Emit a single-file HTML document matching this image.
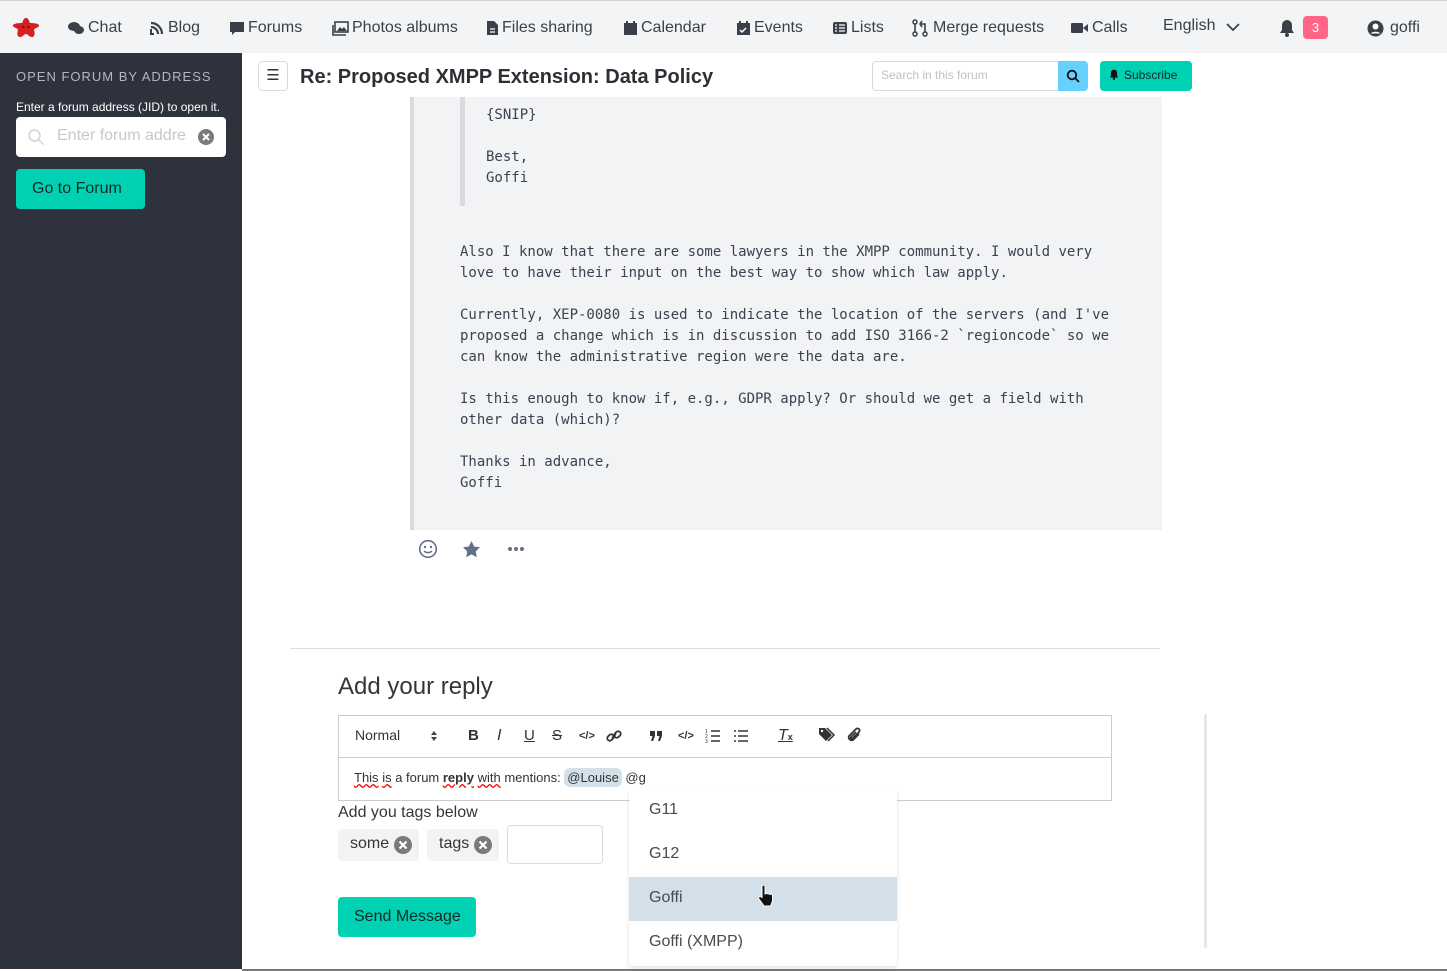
<!DOCTYPE html>
<html><head><meta charset="utf-8"><style>
*{box-sizing:border-box;margin:0;padding:0}
body{width:1447px;height:971px;position:relative;overflow:hidden;background:#fff;font-family:"Liberation Sans",sans-serif;color:#363636}
.abs{position:absolute}
.nav{left:0;top:0;width:1447px;height:53px;background:#f3f4f6;border-top:1px solid #cfcfcf}
.ni{position:absolute;top:18px;font-size:16px;color:#3a3f4a;white-space:nowrap;display:flex;align-items:center;gap:3px}
.side{left:0;top:53px;width:242px;height:916px;background:#2e323d}
.mono{font-family:"DejaVu Sans Mono","Liberation Mono",monospace;font-size:14px;color:#3b4150;white-space:pre;line-height:21px}
.tb{position:absolute;top:727px;font-size:15px;color:#333}
</style></head><body>
<div class="abs nav">
 <svg class="abs" style="left:11px;top:15px" width="30" height="22" viewBox="0 0 30 22"><path d="M15 2 C18 2 18 6 19 7 C24 7 29 8 28 10 C27 12 23 12 23 14 C24 17 24 21 21 21 C18 21 17 18 15 18 C13 18 12 21 9 21 C6 21 6 17 7 14 C7 12 3 12 2 10 C1 8 6 7 11 7 C12 6 12 2 15 2Z" fill="#d61f1f"/><circle cx="12.5" cy="11" r="1" fill="#700"/><circle cx="17.5" cy="11" r="1" fill="#700"/></svg>
 <div class="ni" style="left:67px"><svg width="18" height="14" viewBox="0 0 18 14"><ellipse cx="7" cy="5.5" rx="6" ry="4.5" fill="#3a3f4a"/><ellipse cx="12" cy="9" rx="5" ry="4" fill="#3a3f4a"/></svg>Chat</div>
 <div class="ni" style="left:149px"><svg width="16" height="16" viewBox="0 0 16 16"><path d="M2 3a11 11 0 0 1 11 11M2 7a7 7 0 0 1 7 7" stroke="#3a3f4a" stroke-width="2.2" fill="none"/><path d="M2 9v5h3" stroke="#3a3f4a" stroke-width="2" fill="none"/></svg>Blog</div>
 <div class="ni" style="left:229px"><svg width="16" height="16" viewBox="0 0 16 16"><path d="M1 2h14v10H6l-3 3v-3H1z" fill="#3a3f4a"/></svg>Forums</div>
 <div class="ni" style="left:332px"><svg width="17" height="15" viewBox="0 0 17 15"><rect x="3" y="1" width="13" height="10" fill="none" stroke="#3a3f4a" stroke-width="1.6"/><path d="M1 4v10h13" fill="none" stroke="#3a3f4a" stroke-width="1.6"/><path d="M5 10l3-4 2 2 2-2 3 4z" fill="#3a3f4a"/></svg>Photos albums</div>
 <div class="ni" style="left:486px"><svg width="13" height="16" viewBox="0 0 13 16"><path d="M1 1h7l4 4v10H1z" fill="#3a3f4a"/><path d="M4 9h5M4 12h5" stroke="#fff" stroke-width="1.2"/></svg>Files sharing</div>
 <div class="ni" style="left:623px"><svg width="15" height="16" viewBox="0 0 15 16"><rect x="1" y="3" width="13" height="12" fill="#3a3f4a"/><rect x="3" y="1" width="2" height="3" fill="#3a3f4a"/><rect x="10" y="1" width="2" height="3" fill="#3a3f4a"/></svg>Calendar</div>
 <div class="ni" style="left:736px"><svg width="15" height="16" viewBox="0 0 15 16"><rect x="1" y="3" width="13" height="12" fill="#3a3f4a"/><rect x="3" y="1" width="2" height="3" fill="#3a3f4a"/><rect x="10" y="1" width="2" height="3" fill="#3a3f4a"/><path d="M4 10l2 2 4-4" stroke="#fff" stroke-width="1.5" fill="none"/></svg>Events</div>
 <div class="ni" style="left:832px"><svg width="16" height="14" viewBox="0 0 16 14"><rect x="1" y="1" width="14" height="12" rx="2" fill="#3a3f4a"/><path d="M3 4h2M7 4h6M3 7h2M7 7h6M3 10h2M7 10h6" stroke="#fff" stroke-width="1.3"/></svg>Lists</div>
 <div class="ni" style="left:912px"><svg width="18" height="18" viewBox="0 0 18 18"><circle cx="3" cy="3" r="2" fill="none" stroke="#3a3f4a" stroke-width="1.5"/><circle cx="3" cy="15" r="2" fill="none" stroke="#3a3f4a" stroke-width="1.5"/><circle cx="13" cy="15" r="2" fill="none" stroke="#3a3f4a" stroke-width="1.5"/><path d="M3 5v8M13 13V5H8M10 2l-2 3 2 3" stroke="#3a3f4a" stroke-width="1.6" fill="none"/></svg>Merge requests</div>
 <div class="ni" style="left:1071px"><svg width="18" height="12" viewBox="0 0 18 12"><rect x="0" y="1" width="12" height="10" rx="1" fill="#3a3f4a"/><path d="M12 6l5-4v8z" fill="#3a3f4a"/></svg>Calls</div>
 <div class="ni" style="left:1163px;top:16px">English <svg width="18" height="14" viewBox="0 0 18 14" style="margin-left:6px"><path d="M3 5l6 6 6-6" stroke="#3a3f4a" stroke-width="1.8" fill="none"/></svg></div>
 <svg class="abs" style="left:1279px;top:18px" width="16" height="18" viewBox="0 0 16 18"><path d="M8 1a5 5 0 0 1 5 5v5l2 3H1l2-3V6a5 5 0 0 1 5-5z" fill="#3a3f4a"/><circle cx="8" cy="16" r="2" fill="#3a3f4a"/></svg>
 <div class="abs" style="left:1303px;top:15px;width:25px;height:23px;border-radius:4px;background:#ff6685;color:#fff;font-size:13px;text-align:center;line-height:23px">3</div>
 <div class="ni" style="left:1367px;gap:6px"><svg width="17" height="17" viewBox="0 0 17 17"><circle cx="8.5" cy="8.5" r="8" fill="#3a3f4a"/><circle cx="8.5" cy="6.5" r="3" fill="#fff"/><path d="M3.5 13.5a6 4 0 0 1 10 0" fill="#fff"/></svg>goffi</div>
</div>
<div class="abs side">
 <div class="abs" style="left:16px;top:16px;font-size:13px;letter-spacing:1px;color:#b0b6c2">OPEN FORUM BY ADDRESS</div>
 <div class="abs" style="left:16px;top:47px;font-size:12px;color:#fff">Enter a forum address (JID) to open it.</div>
 <div class="abs" style="left:16px;top:64px;width:210px;height:40px;background:#fff;border-radius:4px">
  <svg class="abs" style="left:11px;top:11px" width="18" height="18" viewBox="0 0 18 18"><circle cx="7.5" cy="7.5" r="5.5" stroke="#d5d8de" stroke-width="1.8" fill="none"/><path d="M11.5 11.5l5 5" stroke="#d5d8de" stroke-width="1.8"/></svg>
  <div class="abs" style="left:41px;top:10px;font-size:16px;color:#c8c8c8">Enter forum addre</div>
  <svg class="abs" style="left:182px;top:12px" width="16" height="16" viewBox="0 0 16 16"><circle cx="8" cy="8" r="8" fill="#7a7a7a"/><path d="M5 5l6 6M11 5l-6 6" stroke="#fff" stroke-width="2"/></svg>
 </div>
 <div class="abs" style="left:16px;top:116px;width:129px;height:40px;background:#00d1b2;border-radius:4px;font-size:16px;color:#0f2a26;padding:11px 0 0 16px">Go to Forum</div>
</div>
<div class="abs" style="left:242px;top:969px;width:1205px;height:2px;background:#777"></div>
<div class="abs" style="left:410px;top:95px;width:752px;height:435px;background:#f2f3f5;border-left:4px solid #d8dade"></div>
<div class="abs" style="left:460px;top:95px;width:5px;height:111px;background:#d8dade"></div>
<div class="abs mono" style="left:486px;top:105px">{SNIP}

Best,
Goffi</div>
<div class="abs mono" style="left:460px;top:242px">Also I know that there are some lawyers in the XMPP community. I would very
love to have their input on the best way to show which law apply.

Currently, XEP-0080 is used to indicate the location of the servers (and I've
proposed a change which is in discussion to add ISO 3166-2 `regioncode` so we
can know the administrative region were the data are.

Is this enough to know if, e.g., GDPR apply? Or should we get a field with
other data (which)?

Thanks in advance,
Goffi</div>
<div class="abs" style="left:242px;top:53px;width:1205px;height:44px;background:#fff"></div>
<div class="abs" style="left:258px;top:61px;width:30px;height:30px;border:1px solid #dbdbdb;border-radius:4px;font-size:15px;text-align:center;line-height:28px;color:#333">☰</div>
<div class="abs" style="left:300px;top:66px;font-size:20px;font-weight:bold;color:#2d2f36">Re: Proposed XMPP Extension: Data Policy</div>
<div class="abs" style="left:872px;top:61px;width:187px;height:30px;border:1px solid #dbdbdb;border-radius:4px 0 0 4px;font-size:12px;color:#c0c0c0;padding:6px 8px">Search in this forum</div>
<div class="abs" style="left:1058px;top:61px;width:30px;height:30px;background:#66d1ff;border-radius:0 4px 4px 0"><svg style="margin:8px" width="14" height="14" viewBox="0 0 14 14"><circle cx="6" cy="6" r="4.3" stroke="#111" stroke-width="1.8" fill="none"/><path d="M9 9l4 4" stroke="#111" stroke-width="1.8"/></svg></div>
<div class="abs" style="left:1100px;top:61px;width:92px;height:30px;background:#00d1b2;border-radius:4px;font-size:12px;color:#0f2a26;padding:7px 0 0 9px"><svg width="10" height="11" viewBox="0 0 16 18" style="vertical-align:-1px;margin-right:5px"><path d="M8 1a5 5 0 0 1 5 5v5l2 3H1l2-3V6a5 5 0 0 1 5-5z" fill="#111"/><circle cx="8" cy="16" r="2" fill="#111"/></svg>Subscribe</div>
<svg class="abs" style="left:418px;top:539px" width="20" height="20" viewBox="0 0 20 20"><circle cx="10" cy="10" r="8.3" stroke="#647089" stroke-width="1.6" fill="none"/><circle cx="7" cy="8" r="1.2" fill="#647089"/><circle cx="13" cy="8" r="1.2" fill="#647089"/><path d="M6 12a5 4 0 0 0 8 0" stroke="#647089" stroke-width="1.5" fill="none"/></svg>
<svg class="abs" style="left:462px;top:540px" width="19" height="18" viewBox="0 0 20 19"><path d="M10 1l2.8 5.8 6.2.8-4.5 4.4 1.1 6.2L10 15.2 4.4 18.2 5.5 12 1 7.6l6.2-.8z" fill="#647089"/></svg>
<svg class="abs" style="left:507px;top:545px" width="18" height="8" viewBox="0 0 18 8"><circle cx="3" cy="4" r="2" fill="#647089"/><circle cx="9" cy="4" r="2" fill="#647089"/><circle cx="15" cy="4" r="2" fill="#647089"/></svg>
<div class="abs" style="left:290px;top:648px;width:870px;height:1px;background:#dcdcdc"></div>
<div class="abs" style="left:338px;top:673px;font-size:24px;color:#363636">Add your reply</div>
<div class="abs" style="left:1204px;top:714px;width:3px;height:234px;background:#e8e8e8;border-radius:2px"></div>
<div class="abs" style="left:338px;top:715px;width:774px;height:86px;border:1px solid #ccc"></div>
<div class="abs" style="left:338px;top:757px;width:774px;height:1px;background:#ccc"></div>
<div class="tb" style="left:355px;font-size:14px;top:727px">Normal</div>
<svg class="abs" style="left:430px;top:729px" width="8" height="14" viewBox="0 0 8 14"><path d="M1 6l3-4 3 4zM1 8l3 4 3-4z" fill="#444"/></svg>
<div class="tb" style="left:468px;font-weight:bold">B</div>
<div class="tb" style="left:497px;font-style:italic;font-size:16px">I</div>
<div class="tb" style="left:524px;text-decoration:underline">U</div>
<div class="tb" style="left:552px;text-decoration:line-through">S</div>
<div class="tb" style="left:579px;font-size:11px;top:730px;font-weight:bold">&lt;/&gt;</div>
<svg class="abs" style="left:606px;top:728px" width="16" height="16" viewBox="0 0 16 16"><path d="M6 10l4-4" stroke="#333" stroke-width="1.6"/><rect x="1" y="7" width="7" height="5" rx="2.5" transform="rotate(-45 4.5 9.5)" stroke="#333" stroke-width="1.8" fill="none"/><rect x="8" y="4" width="7" height="5" rx="2.5" transform="rotate(-45 11.5 6.5)" stroke="#333" stroke-width="1.8" fill="none"/></svg>
<svg class="abs" style="left:649px;top:730px" width="14" height="12" viewBox="0 0 14 12"><path d="M1 1h5v5l-2 5H2l1.5-5H1zM8 1h5v5l-2 5H9l1.5-5H8z" fill="#333"/></svg>
<div class="tb" style="left:678px;font-size:11px;top:730px;font-weight:bold">&lt;/&gt;</div>
<svg class="abs" style="left:705px;top:728px" width="16" height="16" viewBox="0 0 16 16"><path d="M6 3h9M6 8h9M6 13h9" stroke="#333" stroke-width="1.6"/><text x="0" y="5" font-size="5" fill="#333">1</text><text x="0" y="10" font-size="5" fill="#333">2</text><text x="0" y="15" font-size="5" fill="#333">3</text></svg>
<svg class="abs" style="left:733px;top:728px" width="16" height="16" viewBox="0 0 16 16"><path d="M5 3h10M5 8h10M5 13h10M1 3h2M1 8h2M1 13h2" stroke="#333" stroke-width="1.6"/></svg>
<div class="tb" style="left:778px;font-style:italic;text-decoration:underline;font-size:16px">T<span style="font-size:9px;font-style:normal;font-weight:bold">x</span></div>
<svg class="abs" style="left:818px;top:727px" width="18" height="16" viewBox="0 0 18 16"><path d="M1 1h6l7 7-6 6-7-7z" fill="#333"/><circle cx="4" cy="4" r="1.2" fill="#fff"/><path d="M9 1l7 7-6 6" stroke="#333" stroke-width="1.5" fill="none"/></svg>
<svg class="abs" style="left:846px;top:727px" width="16" height="17" viewBox="0 0 16 17"><path d="M13 7l-6 6a3 3 0 0 1-4-4l7-7a2 2 0 0 1 3 3l-6 6a1 1 0 0 1-2-1l5-5" stroke="#333" stroke-width="1.8" fill="none"/></svg>
<div class="abs" style="left:354px;top:770px;font-size:13px;color:#333;white-space:nowrap"><span style="text-decoration:underline wavy red">This</span> <span style="text-decoration:underline wavy red">is</span> a forum <b style="text-decoration:underline wavy red">reply</b> <span style="text-decoration:underline wavy red">with</span> mentions: <span style="background:#d3e0ea;border-radius:6px;padding:2px 3px">@Louise</span> @g</div>
<div class="abs" style="left:338px;top:804px;font-size:16px;color:#363636">Add you tags below</div>
<div class="abs" style="left:338px;top:829px;width:81px;height:32px;background:#f2f3f5;border-radius:4px;font-size:16px;padding:6px 0 0 12px">some</div>
<div class="abs" style="left:427px;top:829px;width:72px;height:32px;background:#f2f3f5;border-radius:4px;font-size:16px;padding:6px 0 0 12px">tags</div>
<svg class="abs" style="left:393px;top:835px" width="20" height="20" viewBox="0 0 20 20"><circle cx="10" cy="10" r="9" fill="#7a7a7a"/><path d="M6.5 6.5l7 7M13.5 6.5l-7 7" stroke="#fff" stroke-width="2.2"/></svg>
<svg class="abs" style="left:473px;top:835px" width="20" height="20" viewBox="0 0 20 20"><circle cx="10" cy="10" r="9" fill="#7a7a7a"/><path d="M6.5 6.5l7 7M13.5 6.5l-7 7" stroke="#fff" stroke-width="2.2"/></svg>
<div class="abs" style="left:507px;top:825px;width:96px;height:39px;border:1px solid #dbdbdb;border-radius:4px"></div>
<div class="abs" style="left:338px;top:897px;width:138px;height:40px;background:#00d1b2;border-radius:4px;font-size:16px;color:#0f2a26;padding:11px 0 0 16px">Send Message</div>
<div class="abs" style="left:629px;top:789px;width:268px;height:177px;background:#fff;border-radius:4px;box-shadow:0 2px 4px rgba(0,0,0,.12)">
 <div style="height:44px;padding:12px 20px;font-size:16px;color:#4a4a4a">G11</div>
 <div style="height:44px;padding:12px 20px;font-size:16px;color:#4a4a4a">G12</div>
 <div style="height:44px;padding:12px 20px;font-size:16px;color:#4a4a4a;background:#d3e0ea">Goffi</div>
 <div style="height:44px;padding:12px 20px;font-size:16px;color:#4a4a4a">Goffi (XMPP)</div>
</div>
<svg class="abs" style="left:757px;top:885px" width="18" height="22" viewBox="0 0 18 22"><path d="M5 1.5a1.5 1.5 0 0 1 3 0V9l1-.5a1.5 1.5 0 0 1 2 .5 1.5 1.5 0 0 1 2 .5 1.5 1.5 0 0 1 2.5 1V16l-2 5H7L2 14a1.5 1.5 0 0 1 2.5-2L5 13z" fill="#111" stroke="#fff" stroke-width="1"/></svg>
</body></html>
